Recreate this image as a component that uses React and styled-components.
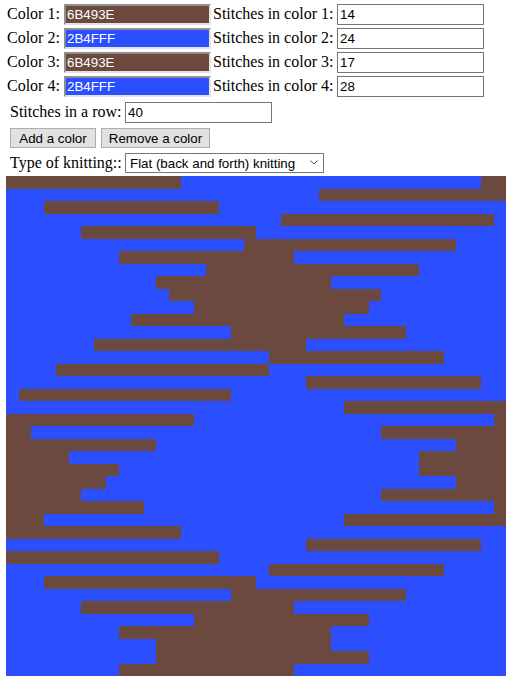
import React, { useMemo, useState } from 'react';
import styled, { createGlobalStyle } from 'styled-components';

const GlobalStyle = createGlobalStyle`
  html, body {
    margin: 0;
    padding: 0;
    background: #fff;
  }
  body {
    font-family: "Liberation Serif", "Times New Roman", serif;
    font-size: 16px;
    color: #000;
  }
`;

const Page = styled.div`
  padding-top: 2px;
`;

const ColorTable = styled.div`
  display: flex;
  flex-direction: column;
  padding-left: 7px;
`;

const FormRow = styled.div`
  display: flex;
  align-items: center;
  height: 24px;
  margin-top: ${(props) => props.$top || 0}px;
  gap: ${(props) => props.$gap || 0}px;
`;

const Label = styled.label`
  flex-shrink: 0;
  width: ${(props) => props.$width}px;
  margin-left: ${(props) => props.$left || 0}px;
  white-space: nowrap;
`;

const BaseInput = styled.input`
  box-sizing: border-box;
  flex-shrink: 0;
  width: 147px;
  height: 21px;
  margin: 0;
  padding: 1px 2px;
  font: 13.33px "Liberation Sans", Arial, sans-serif;
  outline: none;
`;

const ColorInput = styled(BaseInput)`
  padding: 1px;
  color: #fff;
  background: #${(props) => props.$hex};
  border: 2px solid;
  border-color: #8f8f8f #e3e3e3 #e3e3e3 #8f8f8f;
`;

const NumberInput = styled(BaseInput)`
  color: #000;
  background: #fff;
  border: 1px solid #767676;
`;

const Settings = styled.div`
  display: flex;
  flex-direction: column;
  padding-left: 10px;
  padding-top: 2px;
`;

const Button = styled.button`
  box-sizing: border-box;
  width: ${(props) => props.$width}px;
  height: 20px;
  margin: 0;
  padding: 0;
  font: 13.33px "Liberation Sans", Arial, sans-serif;
  color: #000;
  background: #e1e1e1;
  border: 1px solid #adadad;
  cursor: pointer;
`;

const SelectWrap = styled.div`
  position: relative;
  width: 199px;
  height: 20px;
`;

const Select = styled.select`
  box-sizing: border-box;
  appearance: none;
  width: 100%;
  height: 100%;
  margin: 0;
  padding: 0 0 0 4px;
  font: 13.33px "Liberation Sans", Arial, sans-serif;
  color: #000;
  background: #fff;
  border: 1px solid #767676;
  border-radius: 0;
  outline: none;
`;

const Chevron = styled.svg`
  position: absolute;
  right: 6px;
  top: 7px;
  pointer-events: none;
`;

const Pattern = styled.div`
  display: grid;
  grid-template-columns: repeat(${(props) => props.$cols}, 1fr);
  grid-auto-rows: ${(props) => 500 / props.$cols}px;
  width: 500px;
  margin: 1px 0 0 6px;
`;

const Stitch = styled.div`
  background: #${(props) => props.$hex};
`;

const initialColors = [
  { hex: '6B493E', count: 14 },
  { hex: '2B4FFF', count: 24 },
  { hex: '6B493E', count: 17 },
  { hex: '2B4FFF', count: 28 },
];

export default function App() {
  const [colors, setColors] = useState(initialColors);
  const [perRow, setPerRow] = useState(40);
  const [mode, setMode] = useState('flat');

  const updateColor = (index, key, value) => {
    setColors((list) =>
      list.map((c, i) => (i === index ? { ...c, [key]: value } : c))
    );
  };

  const cols = Math.max(1, Number(perRow) || 1);

  // lay the colour sequence out row by row; flat knitting turns every other row
  const stitches = useMemo(() => {
    const seq = [];
    colors.forEach((c) => {
      const n = Math.max(0, Number(c.count) || 0);
      for (let k = 0; k < n; k++) seq.push(c.hex);
    });
    if (!seq.length) return [];
    const cells = [];
    for (let r = 0; r < cols; r++) {
      for (let c = 0; c < cols; c++) {
        const col = mode === 'flat' && r % 2 === 1 ? cols - 1 - c : c;
        cells.push(seq[(r * cols + col) % seq.length]);
      }
    }
    return cells;
  }, [colors, cols, mode]);

  return (
    <Page>
      <GlobalStyle />
      <ColorTable>
        {colors.map((c, i) => (
          <FormRow key={i}>
            <Label $width={57}>Color {i + 1}:</Label>
            <ColorInput
              $hex={c.hex}
              value={c.hex}
              onChange={(e) => updateColor(i, 'hex', e.target.value)}
            />
            <Label $width={124} $left={2}>
              Stitches in color {i + 1}:
            </Label>
            <NumberInput
              value={c.count}
              onChange={(e) => updateColor(i, 'count', e.target.value)}
            />
          </FormRow>
        ))}
      </ColorTable>
      <Settings>
        <FormRow>
          <Label $width={115}>Stitches in a row:</Label>
          <NumberInput value={perRow} onChange={(e) => setPerRow(e.target.value)} />
        </FormRow>
        <FormRow $top={2} $gap={5}>
          <Button
            $width={86}
            onClick={() => setColors((l) => [...l, { hex: 'FFFFFF', count: 10 }])}
          >
            Add a color
          </Button>
          <Button $width={109} onClick={() => setColors((l) => l.slice(0, -1))}>
            Remove a color
          </Button>
        </FormRow>
        <FormRow $top={1}>
          <Label $width={115}>Type of knitting::</Label>
          <SelectWrap>
            <Select value={mode} onChange={(e) => setMode(e.target.value)}>
              <option value="flat">Flat (back and forth) knitting</option>
              <option value="round">Circular knitting</option>
            </Select>
            <Chevron width="8" height="5" viewBox="0 0 8 5">
              <path d="M0.5 0.5 L4 4 L7.5 0.5" fill="none" stroke="#555" strokeWidth="1" />
            </Chevron>
          </SelectWrap>
        </FormRow>
      </Settings>
      <Pattern $cols={cols}>
        {stitches.map((hex, i) => (
          <Stitch key={i} $hex={hex} />
        ))}
      </Pattern>
    </Page>
  );
}
